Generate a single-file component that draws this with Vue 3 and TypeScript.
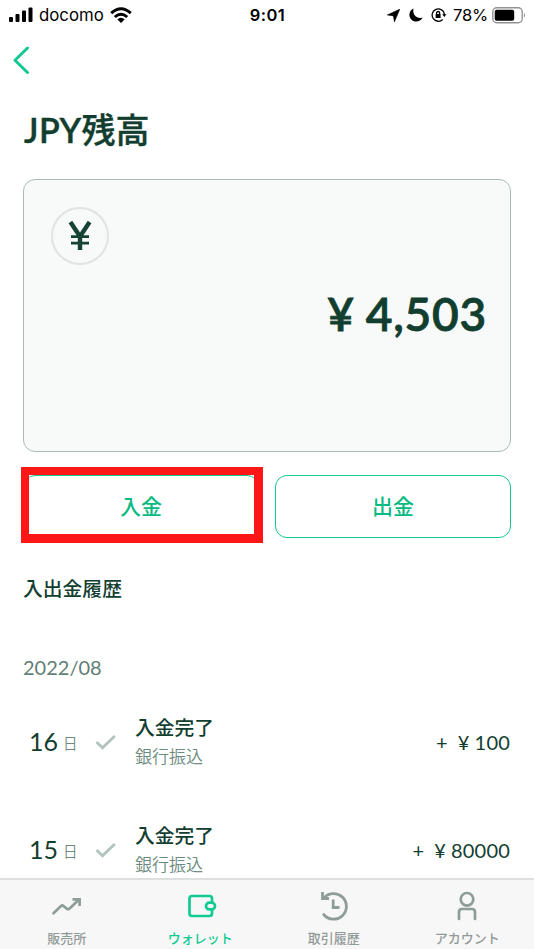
<script setup lang="ts">
interface Entry {
  day: number
  title: string
  method: string
  amount: string
}

const entries: Entry[] = [
  { day: 16, title: '入金完了', method: '銀行振込', amount: '100' },
  { day: 15, title: '入金完了', method: '銀行振込', amount: '80000' },
]
</script>

<template>
  <div class="screen">
    <header class="status">
      <div class="status-left">
        <svg class="signal" width="24" height="16" viewBox="0 0 24 16">
          <rect x="0" y="10" width="4" height="5" rx="1" />
          <rect x="6.5" y="7" width="4" height="8" rx="1" />
          <rect x="13" y="3.5" width="4" height="11.5" rx="1" />
          <rect x="19.5" y="0.5" width="4" height="14.5" rx="1" />
        </svg>
        <span class="carrier">docomo</span>
        <svg class="wifi" width="22" height="17" viewBox="0 0 22 17" fill="none" stroke="#000" stroke-width="2.9">
          <path d="M1.2 6.2Q11-2.6 20.8 6.2M4.8 10Q11 4.4 17.2 10" />
          <path d="M7.3 12.2Q11 9.1 14.7 12.2L11 16Z" fill="#000" stroke="none" />
        </svg>
      </div>
      <span class="time">9:01</span>
      <div class="status-right">
        <svg width="13" height="13" viewBox="0 0 13 13"><path d="M12.9.1L7.400 13 6.400 6.900.2 6Z" stroke="#000" stroke-width=".5" /></svg>
        <svg class="moon" width="14" height="14" viewBox="0 0 14 14"><path d="M4.4.6C2 1.7.4 4 .4 6.8c0 3.800 3 6.800 6.800 6.800 2.800 0 5.200-1.500 6.300-4-4.600 1.700-10.300-1.600-9.100-9Z" /></svg>
        <svg class="lock" width="16" height="14" viewBox="0 0 16 14" fill="none" stroke="#000" stroke-width="1.300">
          <path d="M13.200 5A6.200 6.200 0 1 0 11.700 11.500M8 .8A6.200 6.200 0 0 1 13.300 7" />
          <path d="M11.200 6.300h4.200L13.300 9Z" fill="#000" stroke="none" />
          <path d="M5.600 6V5a1.500 1.500 0 0 1 3 0v1" />
          <rect x="4.600" y="6" width="5" height="4" rx=".5" fill="#000" stroke="none" />
        </svg>
        <span class="percent">78%</span>
        <svg class="battery" width="34" height="17" viewBox="0 0 34 17">
          <rect x=".8" y=".8" width="29.400" height="15" rx="4" fill="#fff" stroke="#929292" stroke-width="1.400" />
          <rect x="2.700" y="2.800" width="19.500" height="11" rx="2" />
          <path d="M32 5.800q2 2.500 0 5Z" fill="#888" />
        </svg>
      </div>
    </header>

    <nav class="back">
      <svg width="17" height="28" viewBox="0 0 17 28" fill="none" stroke="#14c893" stroke-width="3" stroke-linecap="round" stroke-linejoin="round">
        <path d="M14.500 2L2 14.300 14.500 26.500" />
      </svg>
    </nav>

    <h1 class="title"><span>JPY</span>残高</h1>

    <section class="card">
      <div class="coin">
        <svg width="24" height="30" viewBox="0 0 24 30" fill="none" stroke="#164335">
          <path d="M2.400 1L12 15.500 21.600 1M12 14v15" stroke-width="4.400" />
          <path d="M3 15.700h18M3 22.200h18" stroke-width="2.800" />
        </svg>
      </div>
      <div class="balance"><span class="yen">¥</span><span>4,503</span></div>
    </section>

    <div class="actions">
      <div class="action-wrap">
        <button class="action" type="button">入金</button>
        <div class="highlight"></div>
      </div>
      <div class="action-wrap">
        <button class="action" type="button">出金</button>
      </div>
    </div>

    <h2 class="heading">入出金履歴</h2>
    <div class="month">2022/08</div>

    <ul class="entries">
      <li v-for="entry in entries" :key="entry.day" class="entry">
        <span class="day">{{ entry.day }}</span>
        <span class="unit">日</span>
        <svg class="check" width="22" height="16" viewBox="0 0 22 16" fill="none" stroke="#b0c4bd" stroke-width="2.800">
          <path d="M1.500 8L7.500 13.800 19.800 2" />
        </svg>
        <div class="detail">
          <div class="entry-title">{{ entry.title }}</div>
          <div class="method">{{ entry.method }}</div>
        </div>
        <div class="amount"><span class="plus">+</span><span class="small-yen">¥</span><span>{{ entry.amount }}</span></div>
      </li>
    </ul>

    <footer class="tabs">
      <div class="tab">
        <svg width="34" height="32" viewBox="0 0 34 32" fill="none" stroke="#8f9d99" stroke-width="2.700">
          <path d="M3.500 23.200L11 16q1.200-1 2.500 0l3.200 2.600q1.600 1.200 3.200-.3L29 9.500" stroke-linecap="round" />
          <path d="M22.500 9.300H29.600V16" />
        </svg>
        <span>販売所</span>
      </div>
      <div class="tab active">
        <svg width="34" height="32" viewBox="0 0 34 32" fill="none" stroke="#12cb92" stroke-width="2.700">
          <path d="M29 12V8.500q0-2.500-2.500-2.500H9Q6.500 6 6.500 8.500v15Q6.500 26 9 26h17.500q2.500 0 2.500-2.500V20" />
          <rect x="23" y="12.700" width="9" height="6.700" rx="3.300" />
        </svg>
        <span>ウォレット</span>
      </div>
      <div class="tab">
        <svg width="34" height="32" viewBox="0 0 34 32" fill="none" stroke="#8f9d99" stroke-width="2.800">
          <path d="M6.500 8.500A12.800 12.800 0 1 1 6.700 24.500" stroke-linecap="round" />
          <path d="M5.500 2V8.500H12M16.200 9.500v8H22.500" />
        </svg>
        <span>取引履歴</span>
      </div>
      <div class="tab">
        <svg width="34" height="32" viewBox="0 0 34 32" fill="none" stroke="#8f9d99" stroke-width="2.700" stroke-linecap="round">
          <circle cx="17" cy="9.300" r="6.300" />
          <path d="M9 29V22q0-3 3-3h10q3 0 3 3v7" />
        </svg>
        <span>アカウント</span>
      </div>
    </footer>
  </div>
</template>

<style>
body {
  margin: 0;
  background: #fff;
}
</style>

<style scoped>
.screen {
  display: flex;
  flex-direction: column;
  box-sizing: border-box;
  width: 534px;
  height: 949px;
  overflow: hidden;
  background: #fff;
  color: #123e30;
  font-family: Lato, "Noto Sans CJK JP", sans-serif;
}
svg {
  display: block;
  flex: none;
}
.status {
  display: grid;
  grid-template-columns: 1fr auto 1fr;
  align-items: center;
  height: 29px;
  padding: 0 8px 0 9px;
  color: #000;
  font-family: Inter, sans-serif;
  font-size: 17px;
  line-height: 29px;
}
.status-left,
.status-right {
  display: flex;
  align-items: center;
}
.status-right {
  justify-content: flex-end;
}
.carrier {
  margin-left: 6px;
  padding-top: 1px;
  font-size: 16.8px;
}
.wifi {
  margin-left: 6px;
}
.time {
  padding-top: 1px;
  font-size: 16.5px;
  font-weight: 600;
  letter-spacing: 0.5px;
}
.moon {
  margin-left: 9px;
}
.lock {
  margin-left: 8px;
}
.percent {
  margin-left: 6px;
  padding-top: 1px;
  font-size: 16.5px;
  letter-spacing: -0.2px;
}
.battery {
  margin-left: 4px;
}
.back {
  height: 60px;
  padding: 17px 0 0 13px;
  box-sizing: border-box;
}
.title {
  height: 90px;
  margin: 0;
  padding-left: 24px;
  font-size: 34px;
  font-weight: 500;
  line-height: 82px;
  -webkit-text-stroke: 0.4px currentColor;
}
.title span {
  font-weight: 600;
  letter-spacing: 0.4px;
}
.card {
  display: flex;
  flex-direction: column;
  box-sizing: border-box;
  width: 488px;
  height: 273px;
  margin: 0 23px;
  padding: 27px 24px 0 27px;
  border: 1px solid #a9bcb5;
  border-radius: 12px;
  background: #f8fafa;
}
.coin {
  display: flex;
  align-items: center;
  justify-content: center;
  box-sizing: border-box;
  width: 58px;
  height: 58px;
  border: 2px solid #e0e3e1;
  border-radius: 50%;
}
.balance {
  display: flex;
  justify-content: flex-end;
  margin-top: 19px;
  margin-right: -1px;
  font-size: 46px;
  font-weight: 600;
  letter-spacing: 0.8px;
  line-height: 60px;
  -webkit-text-stroke: 0.8px currentColor;
}
.yen {
  margin-right: 11px;
}
.actions {
  display: flex;
  gap: 16px;
  margin: 23px 23px 0;
}
.action-wrap {
  position: relative;
  flex: 1;
  height: 63px;
}
.action {
  display: block;
  box-sizing: border-box;
  width: 100%;
  height: 63px;
  padding: 0 0 5px;
  border: 1px solid #14c893;
  border-radius: 12px;
  background: #fff;
  color: #07b982;
  font: 500 21px/58px "Noto Sans CJK JP", sans-serif;
}
.highlight {
  position: absolute;
  top: -8px;
  left: -2px;
  width: 225px;
  height: 59px;
  border: solid #ff1616;
  border-width: 8px 9px 9px 8px;
}
.heading {
  height: 40px;
  margin: 30px 0 0 23px;
  font-size: 19.800px;
  font-weight: 500;
  line-height: 40px;
}
.month {
  height: 40px;
  margin: 39px 0 0 23px;
  color: #5f7e74;
  font-size: 20px;
  line-height: 40px;
}
.entries {
  flex: 1;
  min-height: 0;
  margin: 1px 0 0;
  padding: 0;
  list-style: none;
}
.entry {
  display: grid;
  grid-template-columns: 34px 32px 40px 1fr auto;
  align-items: center;
  height: 108px;
  padding: 0 24px 0 29px;
}
.day {
  padding-bottom: 2px;
  font-size: 25px;
}
.unit {
  padding-top: 1px;
  color: #6d8a80;
  font-size: 14.5px;
  font-weight: 350;
}
.entry-title {
  font-size: 19.800px;
  font-weight: 500;
  line-height: 29px;
}
.method {
  color: #6d8a80;
  font-size: 17px;
  font-weight: 350;
  line-height: 29px;
}
.amount {
  display: flex;
  padding-bottom: 1px;
  font-size: 20px;
  letter-spacing: 0.2px;
}
.plus {
  margin-right: 10px;
}
.small-yen {
  margin-right: 5px;
}
.tabs {
  display: grid;
  grid-template-columns: repeat(4, 1fr);
  flex: none;
  box-sizing: border-box;
  height: 71px;
  border-top: 2px solid #dedfdf;
  background: #f7f7f7;
}
.tab {
  display: flex;
  flex-direction: column;
  align-items: center;
  padding-top: 10px;
  color: #929a98;
  font: 500 13px/20px "Noto Sans CJK JP", sans-serif;
}
.tab span {
  margin-top: 6px;
}
.tab.active {
  color: #12c990;
}
</style>
